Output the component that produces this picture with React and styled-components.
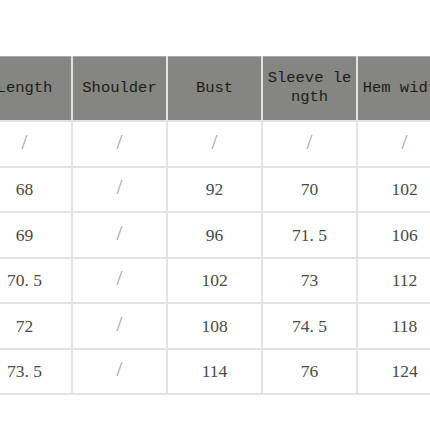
import React from "react";
import styled, { createGlobalStyle } from "styled-components";

const Global = createGlobalStyle`
  html, body { margin: 0; padding: 0; background: #ffffff; overflow: hidden; }
  #root { width: 430px; height: 430px; overflow: hidden; }
`;

const Page = styled.div`
  width: 430px;
  height: 430px;
  overflow: hidden;
  background: #fff;
  padding-top: 56px;
  box-sizing: border-box;
`;

const Grid = styled.div`
  display: grid;
  grid-template-columns: repeat(5, 93px);
  grid-template-rows: 64px 44px 43px 44px 43px 44px 43px;
  gap: 2px;
  padding-bottom: 2px;
  margin-left: -22px;
  width: max-content;
  background: #e3e3e3;
`;

const HeadCell = styled.div`
  background: #858581;
  color: #1c1c1c;
  font-family: "Liberation Mono", "DejaVu Sans Mono", monospace;
  font-size: 15.5px;
  line-height: 19px;
  display: flex;
  align-items: center;
  justify-content: center;
  text-align: center;
  padding: 0 3px;
  word-break: break-all;
  box-shadow: inset 0 1px 0 #a9a9a6;
`;

const Cell = styled.div`
  background: #fff;
  color: ${(p) => (p.$muted ? "#a0a0a0" : "#4a4a4a")};
  font-family: "Liberation Serif", "DejaVu Serif", serif;
  font-size: ${(p) => (p.$muted ? "21px" : "17.5px")};
  display: flex;
  align-items: center;
  justify-content: center;
  padding-bottom: ${(p) => (p.$muted ? "4px" : "0")};
`;

const headers = ["Length", "Shoulder", "Bust", "Sleeve length", "Hem width"];
const rows = [
  ["/", "/", "/", "/", "/"],
  ["68", "/", "92", "70", "102"],
  ["69", "/", "96", "71. 5", "106"],
  ["70. 5", "/", "102", "73", "112"],
  ["72", "/", "108", "74. 5", "118"],
  ["73. 5", "/", "114", "76", "124"],
];

export default function App() {
  return (
    <>
      <Global />
      <Page>
        <Grid>
          {headers.map((h) => (
            <HeadCell key={h}>{h}</HeadCell>
          ))}
          {rows.map((r, i) =>
            r.map((v, j) => (
              <Cell key={`${i}-${j}`} $muted={v === "/"}>
                {v}
              </Cell>
            ))
          )}
        </Grid>
      </Page>
    </>
  );
}
